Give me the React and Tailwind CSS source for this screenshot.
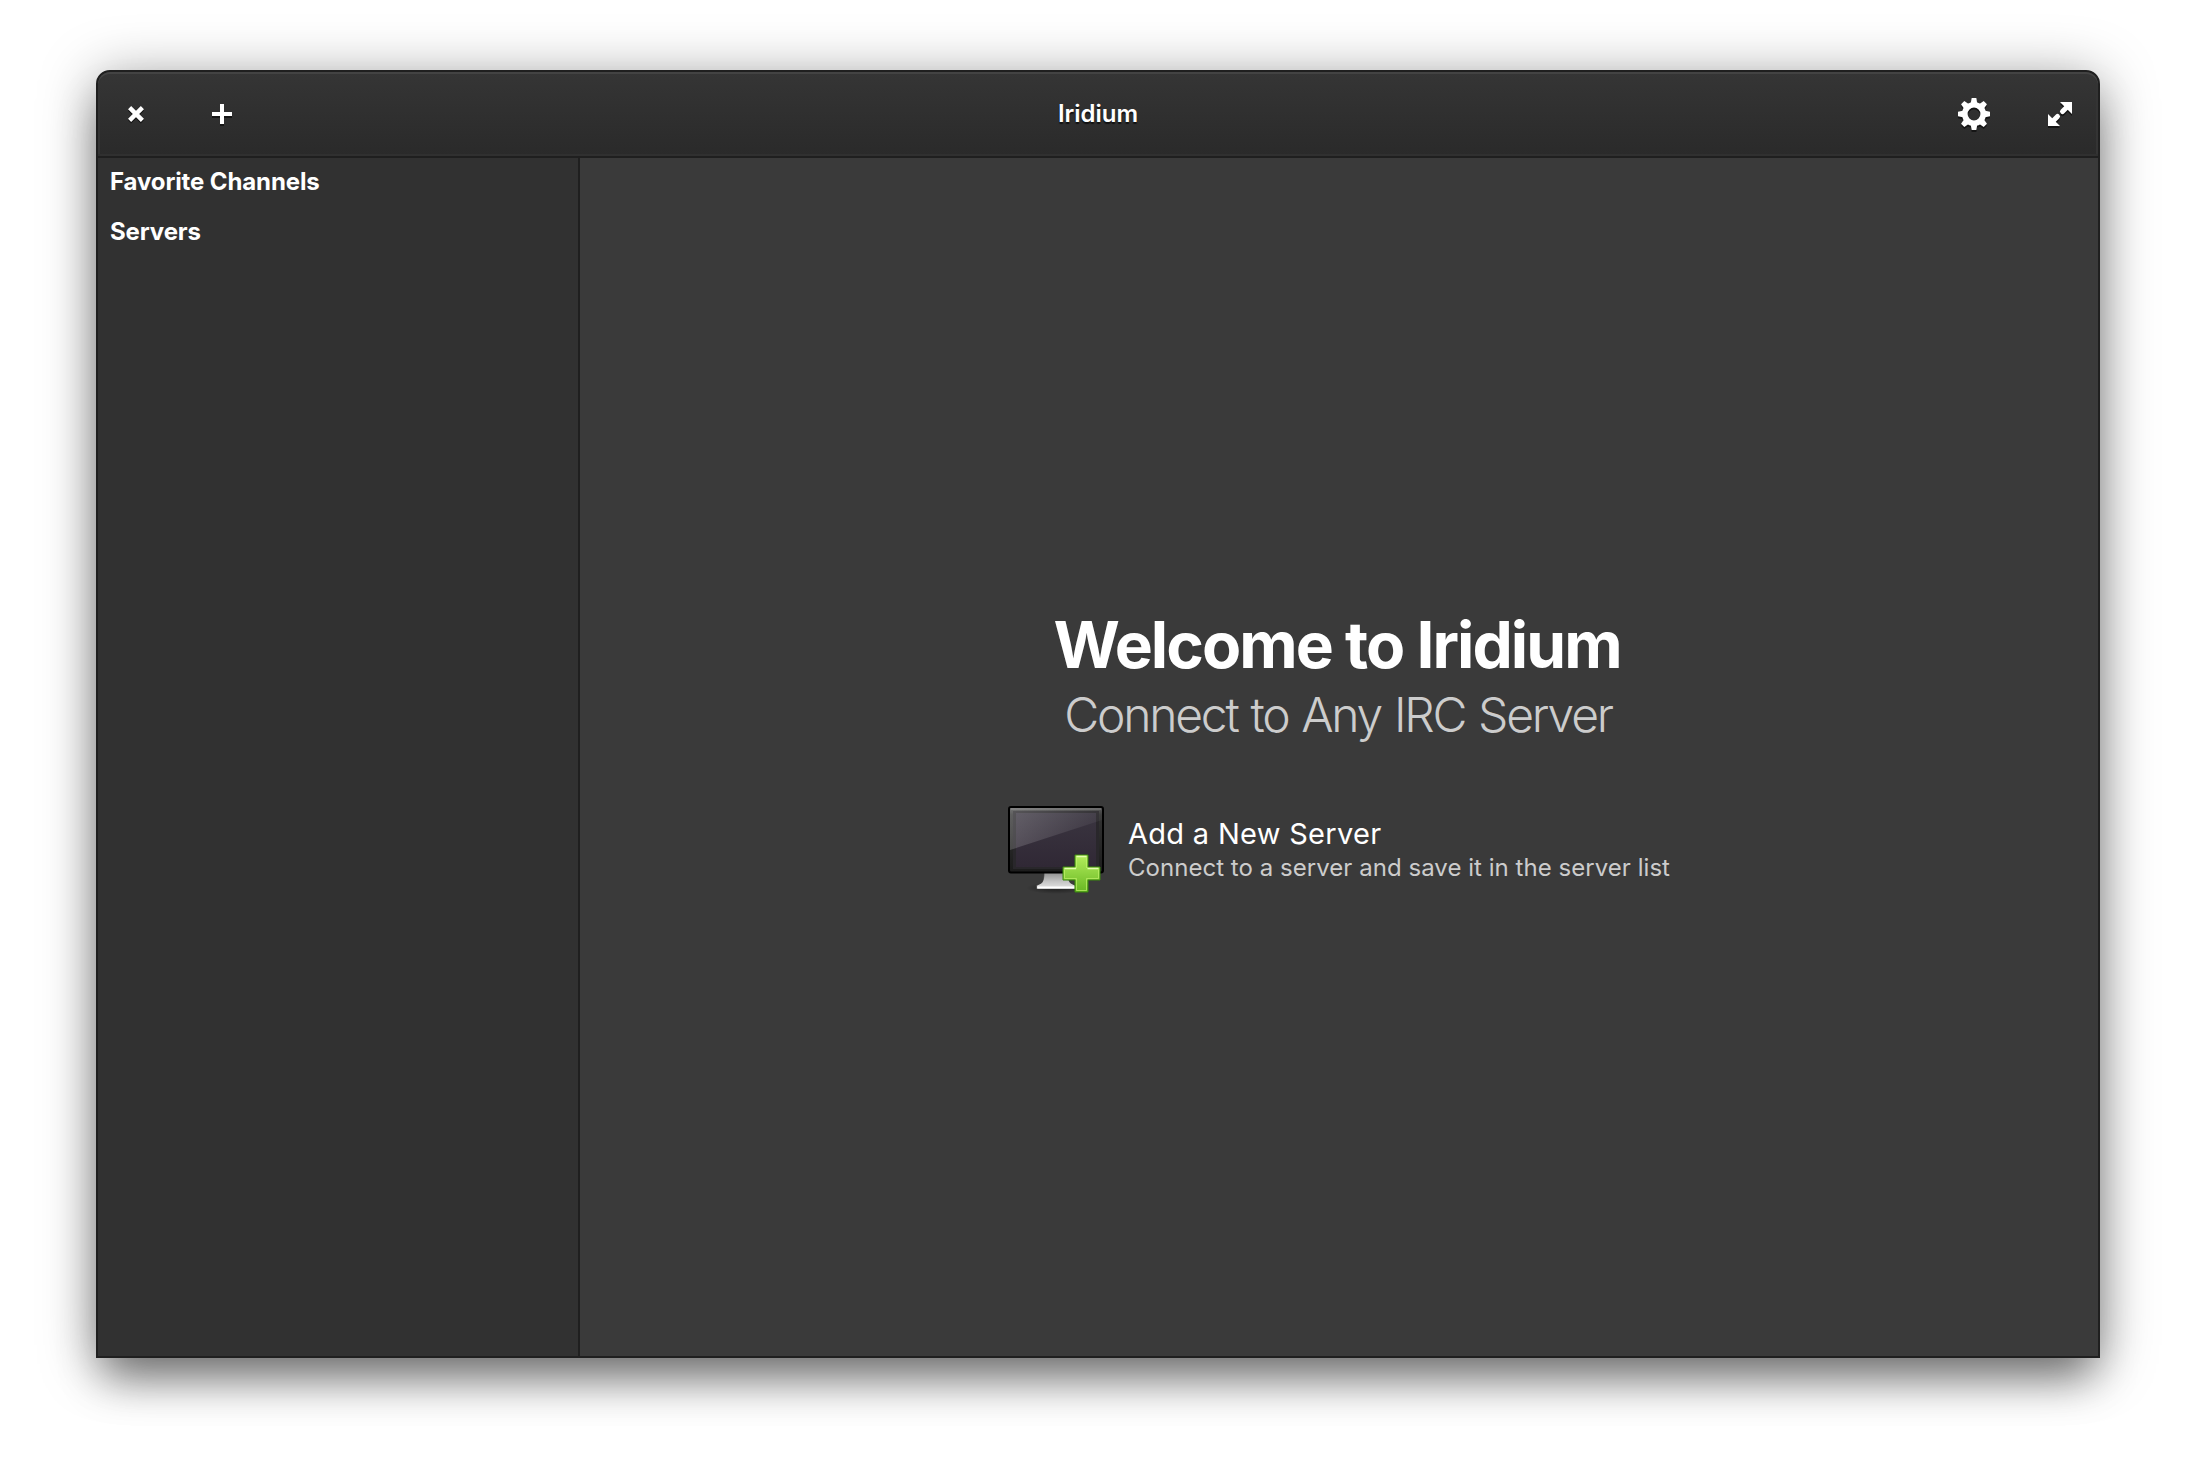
const Close = () => (
  <svg width="16" height="16" viewBox="0 2 16 16" fill="none" strokeWidth="4.4" className="overflow-visible">
    <path d="M1.6 3.6 14.4 16.4M14.4 3.6 1.6 16.4" transform="translate(0 1.5)" stroke="#151515" />
    <path d="M1.6 3.6 14.4 16.4M14.4 3.6 1.6 16.4" stroke="#fff" />
  </svg>
);

const Plus = () => (
  <svg width="20" height="20" viewBox="0 0 20 20" className="overflow-visible">
    <path d="M8 2h4v8h8v4h-8v8H8v-8H0v-4h8z" fill="#151515" />
    <path d="M8 0h4v8h8v4h-8v8H8v-8H0V8h8z" fill="#fff" />
  </svg>
);

const GearShape = () => (
  <>
    <circle cx="16" cy="16" r="9.2" fill="none" stroke="currentColor" strokeWidth="5.6" />
    {[0, 45, 90, 135, 180, 225, 270, 315].map((a) => (
      <path key={a} d="M12.6 6 13.7 0h4.6l1.1 6z" fill="currentColor" transform={`rotate(${a} 16 16)`} />
    ))}
  </>
);

const Gear = () => (
  <svg width="32" height="32" viewBox="0 0 32 32" className="overflow-visible">
    <g className="text-[#151515]" transform="translate(0 2)"><GearShape /></g>
    <g className="text-white"><GearShape /></g>
  </svg>
);

const ExpandShape = () => (
  <>
    <path d="M12 0h12v12zM0 12v12h12z" fill="currentColor" />
    <path d="M19 5 14.500 9.500M9.500 14.500 5 19" stroke="currentColor" strokeWidth="5" strokeLinecap="round" />
  </>
);

const Expand = () => (
  <svg width="24" height="24" viewBox="0 0 24 24" className="overflow-visible">
    <g className="text-[#151515]" transform="translate(0 2)"><ExpandShape /></g>
    <g className="text-white"><ExpandShape /></g>
  </svg>
);

const Monitor = () => (
  <svg width="96" height="96" viewBox="0 0 96 96">
    <defs>
      <linearGradient id="screen" x1="0" y1="0" x2="0" y2="1">
        <stop offset="0" stopColor="#3a3540" /><stop offset="1" stopColor="#302835" />
      </linearGradient>
      <linearGradient id="glare" x1="0" y1="0" x2="1" y2="0.3">
        <stop offset="0" stopColor="#fff" stopOpacity=".22" /><stop offset="1" stopColor="#fff" stopOpacity=".04" />
      </linearGradient>
      <linearGradient id="frame" x1="0" y1="0" x2="0" y2="1">
        <stop offset="0" stopColor="#525252" /><stop offset=".12" stopColor="#333" /><stop offset="1" stopColor="#1c1c1c" />
      </linearGradient>
      <linearGradient id="stand" gradientUnits="userSpaceOnUse" x1="0" y1="66" x2="0" y2="83">
        <stop offset="0" stopColor="#8c8c8c" /><stop offset=".55" stopColor="#c4c4c4" /><stop offset="1" stopColor="#e6e6e6" />
      </linearGradient>
      <linearGradient id="green" x1="0" y1="0" x2="0" y2="1">
        <stop offset="0" stopColor="#b4ee5c" /><stop offset="1" stopColor="#68b723" />
      </linearGradient>
      <radialGradient id="ground">
        <stop offset="0" stopColor="#000" stopOpacity=".5" /><stop offset="1" stopColor="#000" stopOpacity="0" />
      </radialGradient>
    </defs>
    <ellipse cx="48" cy="82" rx="30" ry="6" fill="url(#ground)" />
    <path d="M36 66h24c0 5 .5 9 2.500 11l5 2.500v3.500H28.500v-3.500l5-2.500c2-2 2.500-6 2.500-11z" fill="url(#stand)" stroke="#333" strokeOpacity=".7" />
    <path d="M29.500 81.500h37" stroke="#fff" strokeWidth="2" />
    <rect x="1" y="1" width="94" height="65.500" rx="2" fill="url(#frame)" stroke="#000" strokeWidth="2" />
    <path d="M3 3h90" stroke="#686868" strokeWidth="1.5" />
    <rect x="5" y="5" width="86" height="58" fill="#29272b" />
    <rect x="8" y="7" width="80" height="54" fill="url(#screen)" />
    <path d="M2 2h92v12L2 44z" fill="url(#glare)" />
    <g transform="translate(-.5 -.5)">
      <path d="M67.500 49.500h13v12h12v13h-12v12h-13v-12h-12v-13h12z" fill="url(#green)" stroke="#3a8a0c" />
      <path d="M69 51h10M57 63h11.500M80 63h11" stroke="#e4ffae" strokeWidth="1.6" />
      <path d="M69 52v11M79 52v10.500M57 64v9h12v12h10v-12h12v-9" stroke="#c4f56f" strokeOpacity=".65" fill="none" />
    </g>
  </svg>
);

export default function App() {
  return (
    <div className="h-[1480px] w-[2196px] overflow-hidden bg-white px-24 pt-[70px] font-['Inter',sans-serif] text-white">
      <div className="flex h-[1288px] w-[2004px] flex-col overflow-hidden rounded-t-[14px] border-2 border-[#1f1f1f] bg-[#3a3a3a] shadow-[0_6px_56px_rgba(0,0,0,0.36),0_28px_44px_-8px_rgba(0,0,0,0.42)]">
        <header className="grid h-[86px] shrink-0 grid-cols-3 items-center rounded-t-[12px] border-b-2 border-[#1f1f1f] bg-linear-to-b from-[#353535] to-[#2a2a2a] pr-[26px] pl-[30px] shadow-[inset_0_2px_0_#434343,inset_0_-2px_0_#303030,inset_2px_0_0_#343434,inset_-2px_0_0_#343434]">
          <div className="flex items-center gap-[68px]">
            <Close />
            <Plus />
          </div>
          <h1 className="pr-1 text-center text-2xl font-semibold tracking-normal [text-shadow:0_2px_1px_#111]">Iridium</h1>
          <div className="flex items-center justify-end gap-[58px]">
            <Gear />
            <Expand />
          </div>
        </header>
        <div className="flex min-h-0 grow">
          <aside className="flex w-[482px] shrink-0 flex-col gap-[14px] border-r-2 border-[#1f1f1f] bg-[#313131] px-3 pt-1.5 text-2xl leading-9 font-bold tracking-[-0.12px]">
            <div>Favorite Channels</div>
            <div>Servers</div>
          </aside>
          <main className="flex grow flex-col items-center pt-[447px]">
            <h2 className="pr-1 text-[64px] leading-[80px] font-bold tracking-[-1.95px]">Welcome to Iridium</h2>
            <p className="pr-0.5 text-5xl leading-[60px] font-light tracking-[-2.2px] text-[#cccccc] [word-spacing:1.5px]">Connect to Any IRC Server</p>
            <div className="mt-[61px] flex gap-6">
              <Monitor />
              <div className="flex flex-col pt-2.5">
                <div className="text-[29px] leading-9 tracking-[0.3px]">Add a New Server</div>
                <div className="text-2xl leading-8 tracking-[0.04px] text-[#cccccc]">Connect to a server and save it in the server list</div>
              </div>
            </div>
          </main>
        </div>
      </div>
    </div>
  );
}
